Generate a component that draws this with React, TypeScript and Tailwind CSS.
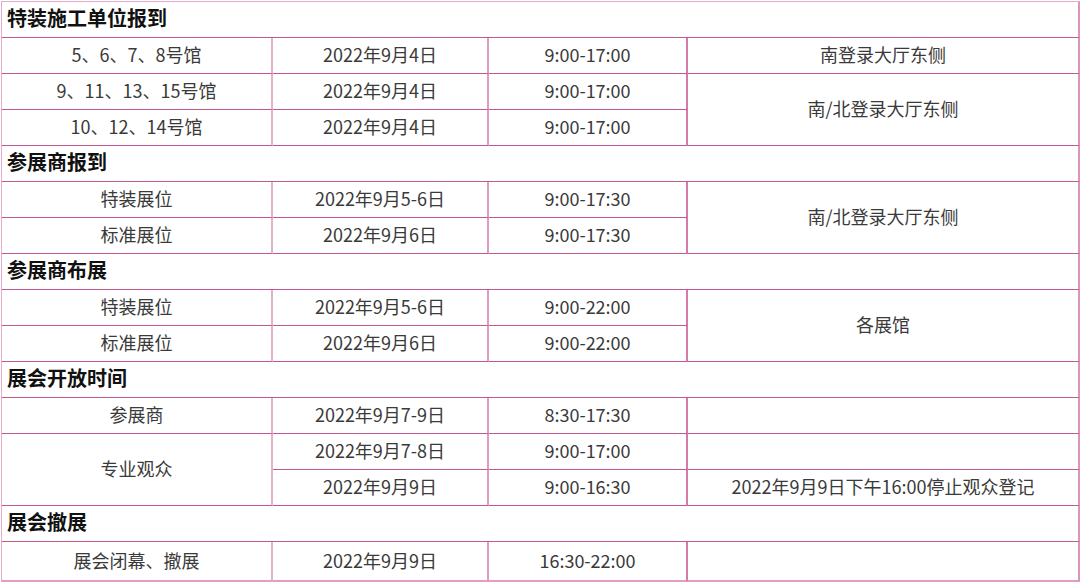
type Cell = { text?: string; rowSpan?: number; col: number };
type Row =
  | { kind: 'section'; title: string }
  | { kind: 'data'; cells: Cell[] };

const rows: Row[] = [
  { kind: 'section', title: '特装施工单位报到' },
  {
    kind: 'data',
    cells: [
      { col: 0, text: '5、6、7、8号馆' },
      { col: 1, text: '2022年9月4日' },
      { col: 2, text: '9:00-17:00' },
      { col: 3, text: '南登录大厅东侧' },
    ],
  },
  {
    kind: 'data',
    cells: [
      { col: 0, text: '9、11、13、15号馆' },
      { col: 1, text: '2022年9月4日' },
      { col: 2, text: '9:00-17:00' },
      { col: 3, text: '南/北登录大厅东侧', rowSpan: 2 },
    ],
  },
  {
    kind: 'data',
    cells: [
      { col: 0, text: '10、12、14号馆' },
      { col: 1, text: '2022年9月4日' },
      { col: 2, text: '9:00-17:00' },
    ],
  },
  { kind: 'section', title: '参展商报到' },
  {
    kind: 'data',
    cells: [
      { col: 0, text: '特装展位' },
      { col: 1, text: '2022年9月5-6日' },
      { col: 2, text: '9:00-17:30' },
      { col: 3, text: '南/北登录大厅东侧', rowSpan: 2 },
    ],
  },
  {
    kind: 'data',
    cells: [
      { col: 0, text: '标准展位' },
      { col: 1, text: '2022年9月6日' },
      { col: 2, text: '9:00-17:30' },
    ],
  },
  { kind: 'section', title: '参展商布展' },
  {
    kind: 'data',
    cells: [
      { col: 0, text: '特装展位' },
      { col: 1, text: '2022年9月5-6日' },
      { col: 2, text: '9:00-22:00' },
      { col: 3, text: '各展馆', rowSpan: 2 },
    ],
  },
  {
    kind: 'data',
    cells: [
      { col: 0, text: '标准展位' },
      { col: 1, text: '2022年9月6日' },
      { col: 2, text: '9:00-22:00' },
    ],
  },
  { kind: 'section', title: '展会开放时间' },
  {
    kind: 'data',
    cells: [
      { col: 0, text: '参展商' },
      { col: 1, text: '2022年9月7-9日' },
      { col: 2, text: '8:30-17:30' },
      { col: 3, text: '' },
    ],
  },
  {
    kind: 'data',
    cells: [
      { col: 0, text: '专业观众', rowSpan: 2 },
      { col: 1, text: '2022年9月7-8日' },
      { col: 2, text: '9:00-17:00' },
      { col: 3, text: '' },
    ],
  },
  {
    kind: 'data',
    cells: [
      { col: 1, text: '2022年9月9日' },
      { col: 2, text: '9:00-16:30' },
      { col: 3, text: '2022年9月9日下午16:00停止观众登记' },
    ],
  },
  { kind: 'section', title: '展会撤展' },
  {
    kind: 'data',
    cells: [
      { col: 0, text: '展会闭幕、撤展' },
      { col: 1, text: '2022年9月9日' },
      { col: 2, text: '16:30-22:00' },
      { col: 3, text: '' },
    ],
  },
];

// vertical divider colour per column
const colBorder = [
  'border-r-2 border-r-[#e3b1cd]',
  'border-r-2 border-r-[#de9cc1]',
  'border-r-2 border-r-[#d67aaa]',
  'border-r-2 border-r-[#dc94bc]',
];

export default function App() {
  const last = rows.length - 1;
  return (
    <div className="w-[1080px] h-[583px] bg-white pt-[1px] pl-[1px] overflow-hidden font-['Noto_Sans_CJK_SC','Noto_Sans',sans-serif]">
      <table className="w-[1078px] table-fixed border-separate border-spacing-0 border-l border-t border-l-[#e3aacb] border-t-[#e3aacb]">
        <colgroup>
          <col className="w-[271px]" />
          <col className="w-[216px]" />
          <col className="w-[199px]" />
          <col className="w-[392px]" />
        </colgroup>
        <tbody>
          {rows.map((row, i) => {
            const isLast = i === last;
            const bottom = isLast
              ? 'border-b-2 border-b-[#df9fc5]'
              : 'border-b border-b-[#c4578f]';
            if (row.kind === 'section') {
              return (
                <tr key={i} className="h-[36px]">
                  <td
                    colSpan={4}
                    className={`p-0 pl-[5px] pb-[3px] h-[36px] text-left text-[20px] leading-[24px] font-bold text-[#111] ${bottom} border-r-2 border-r-[#dc94bc]`}
                  >
                    {row.title}
                  </td>
                </tr>
              );
            }
            return (
              <tr key={i} className={isLast ? 'h-[40px]' : 'h-[36px]'}>
                {row.cells.map((c) => {
                  const spanBottom =
                    c.rowSpan && i + c.rowSpan - 1 === last
                      ? 'border-b-2 border-b-[#df9fc5]'
                      : bottom;
                  return (
                    <td
                      key={c.col}
                      rowSpan={c.rowSpan}
                      className={`p-0 pb-[3px] text-center align-middle text-[18px] leading-[22px] text-[#3a3a3a] ${spanBottom} ${colBorder[c.col]} ${isLast ? 'h-[40px]' : 'h-[36px]'}`}
                    >
                      {c.text}
                    </td>
                  );
                })}
              </tr>
            );
          })}
        </tbody>
      </table>
    </div>
  );
}
